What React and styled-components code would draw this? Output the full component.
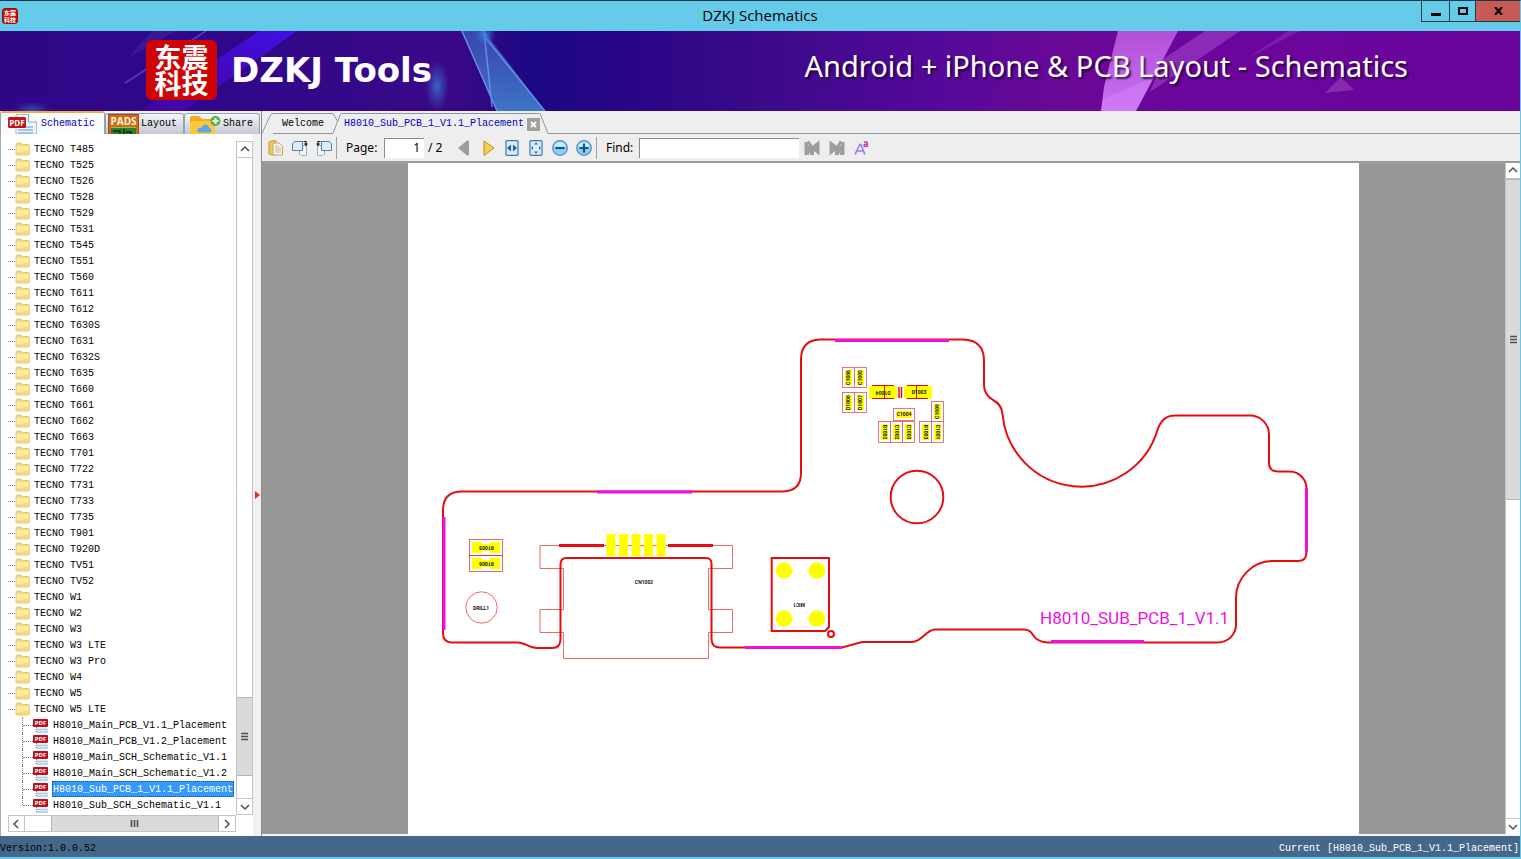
import React from 'react';
import styled, { createGlobalStyle, css } from 'styled-components';

const GlobalStyle = createGlobalStyle`
  *, *::before, *::after { box-sizing: border-box; }
  html, body { margin: 0; padding: 0; height: 100%; }
  #root { height: 100%; }
  button, input { font: inherit; color: inherit; margin: 0; }
  button { padding: 0; border: 0; background: none; cursor: default; }
  svg { display: block; flex: none; }
`;

const mono = '"Liberation Mono", "Noto Sans CJK SC", monospace';
const sans = '"Noto Sans", "Open Sans", sans-serif';
const cjk = '"Noto Sans CJK SC", sans-serif';

/* ---------- window ---------- */
const Window = styled.div`
  display: flex;
  flex-direction: column;
  height: 100vh;
  min-width: 1000px;
  overflow: hidden;
  background: #eeeeee;
  border-top: 1px solid #12394e;
  border-right: 1px solid #66c9e8;
  border-bottom: 2px solid #66c9e8;
  font: 10px/16px ${mono};
  color: #000;
`;

const TitleBar = styled.header`
  display: grid;
  grid-template-columns: 100px 1fr 100px;
  flex: none;
  height: 30px;
  background: #66cae9;
`;

const TitleIcon = styled.div`
  display: flex;
  align-items: center;
  padding-left: 2px;
`;

const Title = styled.h1`
  margin: 0;
  text-align: center;
  font: 400 15px/28px "Open Sans", sans-serif;
`;

const WindowButtons = styled.div`
  display: flex;
  justify-content: flex-end;
  height: 21px;
`;

const WindowButton = styled.button`
  display: flex;
  align-items: center;
  justify-content: center;
  width: ${(p) => p.$width}px;
  border: 1px solid #1d3d4b;
  border-top: 0;
  border-right: 0;
  background: ${(p) => (p.$close ? '#c75a54' : 'transparent')};
`;

/* ---------- banner ---------- */
const Banner = styled.section`
  position: relative;
  display: flex;
  align-items: center;
  justify-content: space-between;
  flex: none;
  height: 80px;
  padding: 0 112px 2px 146px;
  overflow: hidden;
  background: linear-gradient(90deg, #2e0786 0%, #30078a 14%, #390887 30%, #1c0783 35%, #2a0686 42%, #3b098a 50%, #55099a 62%, #6a0896 70%, #6c059c 78%, #69059a 100%);
`;

const BannerArt = styled.svg`
  position: absolute;
  inset: 0;
  width: 100%;
  height: 100%;
`;

const Brand = styled.div`
  position: relative;
  display: flex;
  align-items: center;
  gap: 14px;
`;

const BrandName = styled.span`
  font: 700 34px/40px "DejaVu Sans", sans-serif;
  color: #fff;
`;

const Slogan = styled.p`
  position: relative;
  margin: 0;
  padding-bottom: 8px;
  font: 400 29px/40px ${sans};
  color: #fff;
  text-shadow: 2px 2px 2px rgba(20, 0, 50, 0.8);
`;

const Seal = styled.div`
  display: flex;
  flex-direction: column;
  align-items: center;
  justify-content: center;
  background: #cf0404;
  color: #fff;
  ${(p) =>
    p.$small
      ? css`
          width: 16px;
          height: 16px;
          border: 1px solid #8d1014;
          border-radius: 3px;
          font: 700 6px/7px ${cjk};
        `
      : css`
          width: 71px;
          height: 60px;
          border-radius: 6px;
          font: 700 27px/26px ${cjk};
        `}
`;

/* ---------- main split ---------- */
const Main = styled.main`
  display: flex;
  flex: 1;
  min-height: 0;
`;

const Sidebar = styled.aside`
  display: flex;
  flex-direction: column;
  flex: none;
  width: 262px;
  border-right: 1px solid #8b8b8b;
  background: #f0f2f4;
`;

const SideTabs = styled.div`
  display: flex;
  align-items: flex-end;
  flex: none;
  height: 23px;
`;

const SideTab = styled.button`
  display: flex;
  align-items: center;
  height: ${(p) => (p.$active ? 23 : 21)}px;
  width: ${(p) => p.$width}px;
  padding-left: ${(p) => (p.$active ? 6 : 2)}px;
  gap: ${(p) => p.$gap}px;
  overflow: hidden;
  line-height: 18px;
  border: 1px solid #8fa3b0;
  border-bottom: 0;
  border-radius: 3px 3px 0 0;
  background: linear-gradient(#f6f7f8, #c4c7d6);
  ${(p) =>
    p.$active &&
    css`
      color: #0000cc;
      border-top: 2px solid #f5a83c;
      background: #fbfcfe;
    `}
`;

const SideBody = styled.div`
  display: flex;
  flex: 1;
  min-height: 0;
  border-left: 1px solid #9fb0bc;
`;

const TreePane = styled.div`
  display: grid;
  grid-template-columns: 1fr 17px;
  grid-template-rows: 1fr 17px;
  flex: 1;
  min-width: 0;
  padding: 7px 0 4px 7px;
  background: #fff;
`;

const Splitter = styled.div`
  display: flex;
  align-items: center;
  justify-content: center;
  flex: none;
  width: 8px;
  padding-top: 20px;
  background: #f1f1f1;
`;

const Tree = styled.ul`
  min-height: 0;
  margin: 0;
  padding: 0;
  overflow: hidden;
  list-style: none;
`;

const Branch = styled.ul`
  margin: 0 0 0 14px;
  padding: 0;
  list-style: none;
`;

const TreeRow = styled.button`
  display: flex;
  align-items: center;
  width: 100%;
  height: 16px;
  white-space: nowrap;
  text-align: left;
`;

const Stub = styled.span`
  width: ${(p) => p.$width}px;
  height: 1px;
  flex: none;
  border-top: 1px dotted #808080;
`;

const Trunk = styled.span`
  width: 1px;
  height: ${(p) => (p.$last ? 8 : 16)}px;
  flex: none;
  align-self: flex-start;
  border-left: 1px dotted #808080;
`;

const RowLabel = styled.span`
  height: 16px;
  margin-left: 3px;
  padding: 0 1px;
  line-height: 17px;
  ${(p) =>
    p.$selected &&
    css`
      color: #fff;
      background: #3399ff;
      outline: 1px dotted #1d4f86;
      outline-offset: -1px;
    `}
`;

/* ---------- scroll bars ---------- */
const ScrollTrack = styled.div`
  display: flex;
  flex-direction: ${(p) => (p.$horizontal ? 'row' : 'column')};
  flex: none;
  border: 1px solid #c4c4c4;
  background: #fff;
  ${(p) => p.$narrow && 'width: 15px; border-width: 0 0 0 1px;'}
`;

const ScrollButton = styled.button`
  display: flex;
  align-items: center;
  justify-content: center;
  flex: none;
  width: ${(p) => (p.$horizontal ? '16px' : '100%')};
  height: ${(p) => (p.$horizontal ? '100%' : '16px')};
  border: 0 solid #c4c4c4;
  border-width: ${(p) => p.$edge};
`;

const ScrollGap = styled.div`
  flex: ${(p) => p.$share} 0 0;
`;

const ScrollThumb = styled.div`
  display: flex;
  align-items: center;
  justify-content: center;
  flex: ${(p) => p.$share} 0 0;
  border: 0 solid #b5b5b5;
  border-width: ${(p) => (p.$horizontal ? '0 1px' : '1px 0')};
  background: #dadada;
`;

/* ---------- document side ---------- */
const Document = styled.section`
  display: flex;
  flex-direction: column;
  flex: 1;
  min-width: 0;
`;

const DocTabs = styled.div`
  display: flex;
  align-items: flex-end;
  flex: none;
  height: 23px;
`;

const DocTab = styled.button`
  display: flex;
  align-items: center;
  height: 21px;
  border-top: 1px solid #8699a6;
  border-bottom: 1px solid ${(p) => (p.$active ? '#eeeeee' : '#8699a6')};
  padding: ${(p) => (p.$active ? '0 1px 0 2px' : '0 9px')};
  color: ${(p) => (p.$active ? '#0000cc' : '#000')};
  line-height: 20px;
`;

const TabGroup = styled.div`
  display: flex;
  align-items: center;
`;

const CloseTab = styled.button`
  display: flex;
  align-items: center;
  justify-content: center;
  align-self: flex-end;
  width: 13px;
  height: 13px;
  margin: 0 0 3px 2px;
  background: #a0a0a0;
`;

const CloseCell = styled.div`
  display: flex;
  align-items: flex-end;
  height: 21px;
  border-top: 1px solid #8699a6;
`;

const TabRule = styled.div`
  flex: 1;
  border-bottom: 1px solid #8699a6;
`;

const Toolbar = styled.div`
  display: flex;
  align-items: center;
  flex: none;
  height: 29px;
  padding-left: 2px;
  border-bottom: 2px solid #9b9b9b;
  font: 12px/20px ${sans};
`;

const ToolButton = styled.button`
  display: flex;
  align-items: center;
  justify-content: center;
  width: 24px;
  height: 24px;
`;

const FindTools = styled.div`
  display: flex;
  gap: 1px;
  padding-left: 1px;
`;

const ToolRule = styled.span`
  width: 1px;
  height: 22px;
  margin-right: 9px;
  background: #a3a3a3;
`;

const ToolLabel = styled.label`
  width: ${(p) => p.$width}px;
`;

const ToolInput = styled.input`
  width: ${(p) => p.$width}px;
  height: 20px;
  padding: 0 4px;
  border: 0;
  border-top: 1px solid #8b8b8b;
  border-left: 1px solid #8b8b8b;
  border-radius: 0;
  outline: 0;
  background: #fff;
  text-align: ${(p) => (p.$right ? 'right' : 'left')};
`;

const PageCount = styled.span`
  width: 28px;
  padding-left: 4px;
  white-space: nowrap;
`;

const Viewer = styled.div`
  display: flex;
  flex: 1;
  min-height: 0;
  border-bottom: 2px solid #f4f7fa;
`;

const Canvas = styled.div`
  display: flex;
  justify-content: center;
  flex: 1;
  min-width: 0;
  overflow: hidden;
  background: #989898;
`;

const Sheet = styled.svg`
  height: 100%;
  background: #fff;
`;

const StatusBar = styled.footer`
  display: flex;
  justify-content: space-between;
  flex: none;
  height: 21px;
  padding: 0 1px 0 0;
  overflow: hidden;
  background: #45678a;
  line-height: 26px;
`;

const Current = styled.span`
  color: #fff;
`;

/* ---------- icons ---------- */
const Chevron = ({ dir }) => {
  const d = {
    up: 'M1 6 L5 2 L9 6',
    down: 'M1 3 L5 7 L9 3',
    left: 'M6 1 L2 5 L6 9',
    right: 'M3 1 L7 5 L3 9',
  }[dir];
  return (
    <svg width="10" height="10" viewBox="0 0 10 10">
      <path d={d} fill="none" stroke="#505050" strokeWidth="1.5" />
    </svg>
  );
};

const Grip = ({ horizontal }) => (
  <svg width="9" height="9" viewBox="0 0 9 9">
    <path
      d={horizontal ? 'M1.5 1V8M4.5 1V8M7.5 1V8' : 'M1 1.5H8M1 4.5H8M1 7.5H8'}
      stroke="#505050"
      strokeWidth="1.6"
    />
  </svg>
);

const FolderIcon = () => (
  <svg width="15" height="14" viewBox="0 0 15 14">
    <path d="M1 2.5 Q1 1 2.5 1 H6 L7.5 2.500 H13 Q14.3 2.500 14.3 4 V12 Q14.3 13 13 13 H2 Q1 13 1 12 Z" fill="#f4dc77" stroke="#dcc06a" strokeWidth=".8" />
    <path d="M1.500 4 H13.800 V8 Q7 8.500 1.500 11 Z" fill="#fdf0ae" opacity=".8" />
  </svg>
);

const PdfIcon = ({ tab }) => (
  <svg width={tab ? 30 : 16} height={tab ? 20 : 16} viewBox={tab ? '0 0 30 20' : '0 0 16 16'}>
    {tab ? (
      <>
        <path d="M9 .5H21.5L29.5 8V20H9Z" fill="#eef4fa" stroke="#a9bccd" />
        <path d="M21.5 .5 V8 H29.5" fill="#fff" stroke="#86a4c0" />
        <path d="M11 13H26M11 16H26M11 19H26" stroke="#9ec6e8" strokeWidth="1.8" />
        <rect x="1" y="3" width="18" height="11" rx="1.5" fill="#c90f18" />
        <text x="10" y="11.6" textAnchor="middle" fontFamily="Open Sans, sans-serif" fontWeight="700" fontSize="8" fill="#fff">PDF</text>
      </>
    ) : (
      <>
        <rect x="3.5" y="0" width="11" height="16" fill="#e9f3fb" />
        <path d="M4 12.5H15M4 15H15" stroke="#a8cdea" strokeWidth="1.4" />
        <path d="M3.500 10V16" stroke="#777" strokeDasharray="1 1" />
        <rect x="0" y="2" width="15" height="8" rx="1" fill="#b5121b" />
        <text x="7.5" y="8.4" textAnchor="middle" fontFamily="Open Sans, sans-serif" fontWeight="700" fontSize="6" fill="#fff">PDF</text>
      </>
    )}
  </svg>
);

const PadsIcon = () => (
  <svg width="31" height="20" viewBox="0 0 31 20">
    <rect x=".5" y=".5" width="30" height="20" fill="#d2691a" stroke="#a04c10" />
    <text x="15.500" y="11" textAnchor="middle" fontFamily="Open Sans, sans-serif" fontWeight="700" fontSize="10" fill="#fff6d8">PADS</text>
    <rect x="3" y="13" width="25" height="7" fill="#2f7d2c" />
    <path d="M5 17H12V20M16 15V20M18 18H23V20" fill="none" stroke="#123f16" strokeWidth="2" />
    <path d="M3 13.5H28" stroke="#8bc15a" />
  </svg>
);

const ShareIcon = () => (
  <svg width="34" height="20" viewBox="0 0 34 20">
    <path d="M3 4Q3 2 5 2H12L15 5H26Q28 5 28 7V20H3Z" fill="#f3a91c" />
    <path d="M3 9Q3 7 5 7H26Q28 7 28 9V20H3Z" fill="#fcc739" />
    <path d="M12 18.5Q9 17 11 14.5Q13 13 14.500 14Q15.500 10 19 10.500Q22 11 22 14Q25 14.500 24.500 17Q24 18.500 22 18.500Z" fill="#59a8ec" />
    <circle cx="28.500" cy="7" r="5" fill="#4fb348" />
    <path d="M25.500 7H31.500M28.500 4V10" stroke="#fff" strokeWidth="2" />
  </svg>
);

const Svg16 = ({ children }) => (
  <svg width="16" height="16" viewBox="0 0 16 16" fill="none">
    {children}
  </svg>
);

const OpenIcon = () => (
  <Svg16>
    <path d="M1 2L4 .8H8V15H4L1 14Z" fill="#f1c765" stroke="#c9973b" />
    <path d="M5 3H11L14.5 6V15H5Z" fill="#faf6ea" stroke="#c7a667" />
    <path d="M7 6H11M7 8H13M7 10H13M7 12H13" stroke="#c2b493" />
  </Svg16>
);

const RotateIcon = ({ left }) => (
  <Svg16>
    <g transform={left ? 'translate(16 0) scale(-1 1)' : undefined}>
      <path d="M7.5 5.5H14.5V15.5H9L7.5 14Z" fill="#f3f6f9" stroke="#9aabba" />
      <path d="M.5 3.5L3 1.5H10.5V10.5H.5Z" fill="#d9ecfb" stroke="#5680a8" />
      <path d="M11.5 1.5H14V5" stroke="#222" strokeWidth="1.2" />
      <path d="M11.8 3.6H16L14 6.2Z" fill="#222" />
    </g>
  </Svg16>
);

const FitIcon = ({ page }) => (
  <Svg16>
    <rect x="2" y=".7" width="12" height="14.6" rx="1" fill="#d7ebfb" stroke="#3c77b2" strokeWidth="1.2" />
    {page ? (
      <path d="M8 2.2L10 4.4H6ZM8 13.8L10 11.6H6ZM3 8L5 6V10ZM13 8L11 6V10Z" fill="#2d6fb4" />
    ) : (
      <path d="M3 8L7 4.5V11.5ZM13 8L9 4.5V11.5Z" fill="#1f62a8" />
    )}
  </Svg16>
);

const ZoomIcon = ({ plus }) => (
  <Svg16>
    <circle cx="8" cy="8" r="7.3" fill="#8fcdf3" stroke="#4e8fc2" strokeWidth="1.2" />
    <path d="M2.3 6.5A6 6 0 0 1 13.7 6.5Q8 8 2.3 6.5Z" fill="#d3effd" />
    <path d={plus ? 'M3.5 8H12.5M8 3.5V12.5' : 'M3.5 8H12.5'} stroke="#0d5796" strokeWidth="2.2" />
  </Svg16>
);

const FindIcon = ({ next }) => (
  <Svg16>
    <g transform={next ? 'translate(16 0) scale(-1 1)' : undefined}>
      <path d="M.500 2H3L4 1H6V3L8 4V6L15.500 .500V15.500L10 11V15H6V13H5V15H.500Z" fill="#9d9d9d" />
      <path d="M3.500 5H5" stroke="#d4d4d4" />
    </g>
  </Svg16>
);

const CaseIcon = () => (
  <Svg16>
    <path d="M1 14.5L5.8 4.5H7L10.8 14.5M2.8 11H9.3" stroke="#9a7df0" strokeWidth="1.7" />
    <path d="M10 2.5Q13.4 .8 13.4 3.5V7M13.4 4Q9.7 4 10 5.6Q10.8 7.5 13.4 5.6" stroke="#c044a0" strokeWidth="1.5" />
  </Svg16>
);

/* ---------- data ---------- */
const folders = [
  'T485', 'T525', 'T526', 'T528', 'T529', 'T531', 'T545', 'T551', 'T560', 'T611', 'T612', 'T630S',
  'T631', 'T632S', 'T635', 'T660', 'T661', 'T662', 'T663', 'T701', 'T722', 'T731', 'T733', 'T735',
  'T901', 'T920D', 'TV51', 'TV52', 'W1', 'W2', 'W3', 'W3 LTE', 'W3 Pro', 'W4', 'W5', 'W5 LTE',
];

const files = [
  'H8010_Main_PCB_V1.1_Placement',
  'H8010_Main_PCB_V1.2_Placement',
  'H8010_Main_SCH_Schematic_V1.1',
  'H8010_Main_SCH_Schematic_V1.2',
  'H8010_Sub_PCB_1_V1.1_Placement',
  'H8010_Sub_SCH_Schematic_V1.1',
];

const current = 'H8010_Sub_PCB_1_V1.1_Placement';

/* Small two-pad parts: name, left, top, width, height, label angle */
const parts = [
  ['C1006', 842, 367, 12, 20, -90],
  ['C1005', 854, 367, 12, 20, -90],
  ['D1006', 842, 392, 12, 20, -90],
  ['D1007', 854, 392, 12, 20, -90],
  ['C1004', 893, 408, 21, 12, 0],
  ['C1009', 931, 401, 12, 20, -90],
  ['R1002', 878, 421, 12, 21, 90],
  ['C1002', 890, 421, 12, 21, 90],
  ['C1003', 902, 421, 12, 21, 90],
  ['R1003', 919, 421, 12, 21, 90],
  ['C1001', 931, 421, 12, 21, 90],
];

const PartText = ({ x, y, angle = 0, children }) => (
  <text
    x={x}
    y={y}
    dy=".36em"
    textAnchor="middle"
    transform={`rotate(${angle} ${x} ${y})`}
    fontFamily="Roboto, sans-serif"
    fontSize="5"
    fontWeight="700"
    fill="#111"
  >
    {children}
  </text>
);

const Board = () => (
  <Sheet viewBox="408 163 951 671" role="img" aria-label="Board placement drawing">
    <g fill="none" stroke="#e8262a" strokeWidth=".7">
      <path d="M540 545.5H732.5V568.5H708.5V609.5H732.5V632.5H708.5V658.5H563.5V632.5H540V609.5H563.5V568.5H540Z" />
      <circle cx="481.5" cy="607.5" r="15.7" />
      <rect x="469.5" y="539.5" width="33" height="16" />
      <rect x="469.5" y="555.5" width="33" height="16" />
    </g>
    <path
      fill="none"
      stroke="#e80b10"
      strokeWidth="2"
      d="M443 510Q443 491.5 462 491.5H783Q801 491 801 473V360Q801 340 820 339.5H963Q984 340 984 361V385C984 393 988 397 993 400C999 403 1002 408 1002.5 414A79.3 79.3 0 0 0 1157.5 430Q1162 415.5 1175 415.5H1250A19 19 0 0 1 1269 434V463Q1269 471.5 1278 471.5H1290A17 17 0 0 1 1306.5 488V552Q1306.500 561 1298 561H1273A37 37 0 0 0 1236 598V625A18 18 0 0 1 1218 642.5H1048C1040 642.5 1035 638 1033 635Q1030 629.500 1024 629.500H935C926 629.500 922 642 912 642H862L842 647.500H720Q711.500 647.500 711.500 639V564Q711.500 558 706 558H566Q561 558 560.500 564V639Q560.500 648 552 648H537C529 648 525 642.500 518 642.500H452Q443 642.500 443 633Z"
    />
    <g stroke="#ee10e0" strokeWidth="3" fill="none">
      <path d="M835 340.500H949M597 492H692M444 517V630M745 647.500H842M1051 641.500H1144M1306.500 488V552" />
    </g>
    <path d="M559 545.500H604M668 545.500H713" stroke="#e80b10" strokeWidth="3" />
    <g fill="#ffff00">
      {[606.5, 619, 631.5, 644, 656.5].map((x) => (
        <rect key={x} x={x} y="534" width="9" height="22" />
      ))}
      {[784, 817].map((x) => [570.5, 618.5].map((y) => <circle key={`${x}-${y}`} cx={x} cy={y} r="8.300" />))}
      <path d="M472 542H482V544H490V542H500V553H490V551H482V553H472ZM472 558H482V560H490V558H500V569H490V567H482V569H472Z" />
      <rect x="869" y="386" width="28" height="13" rx="2" />
      <rect x="904" y="386" width="28" height="13" rx="2" />
    </g>
    <g fill="none" stroke="#e80b10">
      <path d="M771.700 558H829V627L825 631H771.700Z" strokeWidth="2" />
      <circle cx="831" cy="634" r="3" strokeWidth="2" />
      <circle cx="917" cy="497" r="26.300" strokeWidth="2" />
      <path d="M899 387V398M901.500 387V398" strokeWidth="1.500" />
      <path d="M884.500 386V398M916.500 386V398M872 385.500H894M907 385.500H928M872 398.500H894M907 398.500H928" strokeWidth="1" />
    </g>
    {parts.map(([name, x, y, w, h, angle]) => (
      <g key={name}>
        <rect x={x + 0.5} y={y + 0.5} width={w} height={h} fill="#fff" stroke="#e0555f" strokeWidth=".8" />
        <rect x={x + 3} y={y + 3} width={w - 5} height={h - 5} fill="#ffff00" />
        <PartText x={x + w / 2 + 0.5} y={y + h / 2 + 0.5} angle={angle}>{name}</PartText>
      </g>
    ))}
    <PartText x={883} y={392.5} angle={180}>D1004</PartText>
    <PartText x={919} y={392.5}>D1003</PartText>
    <PartText x={486.500} y={548} angle={180}>R1005</PartText>
    <PartText x={486.500} y={564} angle={180}>R1006</PartText>
    <PartText x={481} y={608}>DRILL1</PartText>
    <PartText x={644} y={582}>CN1002</PartText>
    <PartText x={799} y={604.500} angle={180}>MIC1</PartText>
    <text x="1040" y="624" fontFamily="Roboto, sans-serif" fontSize="17" fill="#ee10e0">
      H8010_SUB_PCB_1_V1.1
    </text>
  </Sheet>
);

const BannerShapes = () => (
  <BannerArt viewBox="0 0 1520 80" preserveAspectRatio="none" aria-hidden="true">
    <defs>
      <linearGradient id="beam" x1="1" y1="0" x2="0" y2="1">
        <stop offset="0" stopColor="#4210ee" stopOpacity=".9" />
        <stop offset="1" stopColor="#4c05b4" stopOpacity=".6" />
      </linearGradient>
      <linearGradient id="prism" x1="0" y1="0" x2="0" y2="1">
        <stop offset="0" stopColor="#4166c4" stopOpacity=".65" />
        <stop offset="1" stopColor="#4182cc" stopOpacity=".9" />
      </linearGradient>
      <linearGradient id="pink" x1="0" y1="0" x2="0" y2="1">
        <stop offset="0" stopColor="#b250d6" />
        <stop offset="1" stopColor="#c870f2" />
      </linearGradient>
      <radialGradient id="glow">
        <stop offset="0" stopColor="#3c8bd8" stopOpacity=".9" />
        <stop offset="1" stopColor="#3c6bd8" stopOpacity="0" />
      </radialGradient>
    </defs>
    <path d="M259 0H297L184 80H140Z" fill="url(#beam)" />
    <path d="M206 0L125 52" stroke="#6254ce" strokeWidth="1.500" opacity=".7" />
    <path d="M152 0H176L128 27Z" fill="#5a3fb0" opacity=".3" />
    <ellipse cx="437" cy="55" rx="12" ry="26" fill="url(#glow)" opacity=".8" />
    <ellipse cx="32" cy="80" rx="20" ry="10" fill="url(#glow)" opacity=".6" />
    <path d="M461 0H484L545 80H497Z" fill="url(#prism)" />
    <path d="M484 0L492 76M484 5L545 80M462 0L497 80" stroke="#6c9cf4" strokeWidth="1.500" fill="none" opacity=".8" />
    <circle cx="485" cy="4" r="11" fill="url(#glow)" />
    <path d="M1118 0H1178L1136 80H1101L1104 56Z" fill="url(#pink)" />
    <path d="M1103 68L1155 45L1136 80H1101Z" fill="#dc8dff" opacity=".35" />
    <path d="M1205 0H1240L1150 61L1163 28Z" fill="#a94fd0" opacity=".5" />
    <path d="M1288 0H1300L1246 28Z" fill="#a94fd0" opacity=".3" />
    <path d="M1341 46L1354 59L1325 62Z" fill="#9445bd" opacity=".6" />
  </BannerArt>
);

const SealMark = ({ small }) => (
  <Seal $small={small}>
    <span>东震</span>
    <span>科技</span>
  </Seal>
);

const Tool = ({ label, children }) => (
  <ToolButton type="button" aria-label={label}>
    {children}
  </ToolButton>
);

export default function App() {
  return (
    <Window>
      <GlobalStyle />
      <TitleBar>
        <TitleIcon>
          <SealMark small />
        </TitleIcon>
        <Title>DZKJ Schematics</Title>
        <WindowButtons>
          <WindowButton type="button" aria-label="Minimize" $width={28}>
            <svg width="10" height="9"><rect y="6" width="10" height="3" /></svg>
          </WindowButton>
          <WindowButton type="button" aria-label="Maximize" $width={26}>
            <svg width="10" height="8"><rect x="1" y="1" width="8" height="6" fill="none" stroke="#000" strokeWidth="2" /></svg>
          </WindowButton>
          <WindowButton type="button" aria-label="Close" $width={45} $close>
            <svg width="9" height="8"><path d="M1 0L8 8M8 0L1 8" stroke="#000" strokeWidth="2.200" /></svg>
          </WindowButton>
        </WindowButtons>
      </TitleBar>

      <Banner>
        <BannerShapes />
        <Brand>
          <SealMark />
          <BrandName>DZKJ Tools</BrandName>
        </Brand>
        <Slogan>Android + iPhone &amp; PCB Layout - Schematics</Slogan>
      </Banner>

      <Main>
        <Sidebar>
          <SideTabs>
            <SideTab type="button" $active $width={105} $gap={4}>
              <PdfIcon tab />
              Schematic
            </SideTab>
            <SideTab type="button" $width={79} $gap={2}>
              <PadsIcon />
              Layout
            </SideTab>
            <SideTab type="button" $width={76} $gap={2}>
              <ShareIcon />
              Share
            </SideTab>
          </SideTabs>
          <SideBody>
            <TreePane>
              <Tree>
                {folders.map((name) => (
                  <li key={name}>
                    <TreeRow type="button">
                      <Stub $width={7} />
                      <FolderIcon />
                      <RowLabel>TECNO {name}</RowLabel>
                    </TreeRow>
                  </li>
                ))}
                <li>
                  <Branch>
                    {files.map((name, i) => (
                      <li key={name}>
                        <TreeRow type="button">
                          <Trunk $last={i === files.length - 1} />
                          <Stub $width={10} />
                          <PdfIcon />
                          <RowLabel $selected={name === current}>{name}</RowLabel>
                        </TreeRow>
                      </li>
                    ))}
                  </Branch>
                </li>
              </Tree>
              <ScrollTrack>
                <ScrollButton type="button" aria-label="Scroll up" $edge="0 0 1px"><Chevron dir="up" /></ScrollButton>
                <ScrollGap $share={541} />
                <ScrollThumb $share={77}><Grip /></ScrollThumb>
                <ScrollGap $share={22} />
                <ScrollButton type="button" aria-label="Scroll down" $edge="1px 0 0"><Chevron dir="down" /></ScrollButton>
              </ScrollTrack>
              <ScrollTrack $horizontal>
                <ScrollButton type="button" aria-label="Scroll left" $horizontal $edge="0 1px 0 0"><Chevron dir="left" /></ScrollButton>
                <ScrollGap $share={26} />
                <ScrollThumb $horizontal $share={168}><Grip horizontal /></ScrollThumb>
                <ScrollButton type="button" aria-label="Scroll right" $horizontal $edge="0"><Chevron dir="right" /></ScrollButton>
              </ScrollTrack>
            </TreePane>
            <Splitter>
              <svg width="5" height="8"><path d="M0 0L5 4L0 8Z" fill="#e03020" /></svg>
            </Splitter>
          </SideBody>
        </Sidebar>

        <Document>
          <DocTabs>
            <svg width="11" height="21" viewBox="0 0 11 21"><path d="M0 20.500L8 3Q9 .500 11 .500" fill="none" stroke="#8699a6" /></svg>
            <DocTab type="button">Welcome</DocTab>
            <svg width="9" height="21" viewBox="0 0 9 21"><path d="M0 20.500L7 2Q8 .500 9 .500M0 .500L5 9" fill="none" stroke="#8699a6" /></svg>
            <TabGroup>
              <DocTab type="button" $active>{current}</DocTab>
              <CloseCell>
                <CloseTab type="button" aria-label="Close tab">
                  <svg width="7" height="7"><path d="M1 1L6 6M6 1L1 6" stroke="#fff" strokeWidth="1.800" /></svg>
                </CloseTab>
              </CloseCell>
            </TabGroup>
            <svg width="9" height="21" viewBox="0 0 9 21"><path d="M0 .500L8 20.500H9" fill="none" stroke="#8699a6" /></svg>
            <TabRule />
          </DocTabs>

          <Toolbar>
            <Tool label="Open"><OpenIcon /></Tool>
            <Tool label="Rotate right"><RotateIcon /></Tool>
            <Tool label="Rotate left"><RotateIcon left /></Tool>
            <ToolRule />
            <ToolLabel htmlFor="page" $width={38}>Page:</ToolLabel>
            <ToolInput id="page" defaultValue="1" $width={40} $right />
            <PageCount>/ 2</PageCount>
            <Tool label="Previous page">
              <Svg16><path d="M13 .500V15.500H11L2 8L11 .500Z" fill="#9d9d9d" /></Svg16>
            </Tool>
            <Tool label="Next page">
              <Svg16><path d="M4 1L14 8L4 15.500Z" fill="#f6cf4c" stroke="#c08a1c" /></Svg16>
            </Tool>
            <Tool label="Fit width"><FitIcon /></Tool>
            <Tool label="Fit page"><FitIcon page /></Tool>
            <Tool label="Zoom out"><ZoomIcon /></Tool>
            <Tool label="Zoom in"><ZoomIcon plus /></Tool>
            <ToolRule />
            <ToolLabel htmlFor="find" $width={33}>Find:</ToolLabel>
            <ToolInput id="find" $width={160} />
            <FindTools>
              <Tool label="Find previous"><FindIcon /></Tool>
              <Tool label="Find next"><FindIcon next /></Tool>
              <Tool label="Match case"><CaseIcon /></Tool>
            </FindTools>
          </Toolbar>

          <Viewer>
            <Canvas>
              <Board />
            </Canvas>
            <ScrollTrack $narrow>
              <ScrollButton type="button" aria-label="Page up" $edge="0 0 1px"><Chevron dir="up" /></ScrollButton>
              <ScrollThumb $share={320}><Grip /></ScrollThumb>
              <ScrollGap $share={320} />
              <ScrollButton type="button" aria-label="Page down" $edge="1px 0 0"><Chevron dir="down" /></ScrollButton>
            </ScrollTrack>
          </Viewer>
        </Document>
      </Main>

      <StatusBar>
        <span>Version:1.0.0.52</span>
        <Current>Current [{current}]</Current>
      </StatusBar>
    </Window>
  );
}
